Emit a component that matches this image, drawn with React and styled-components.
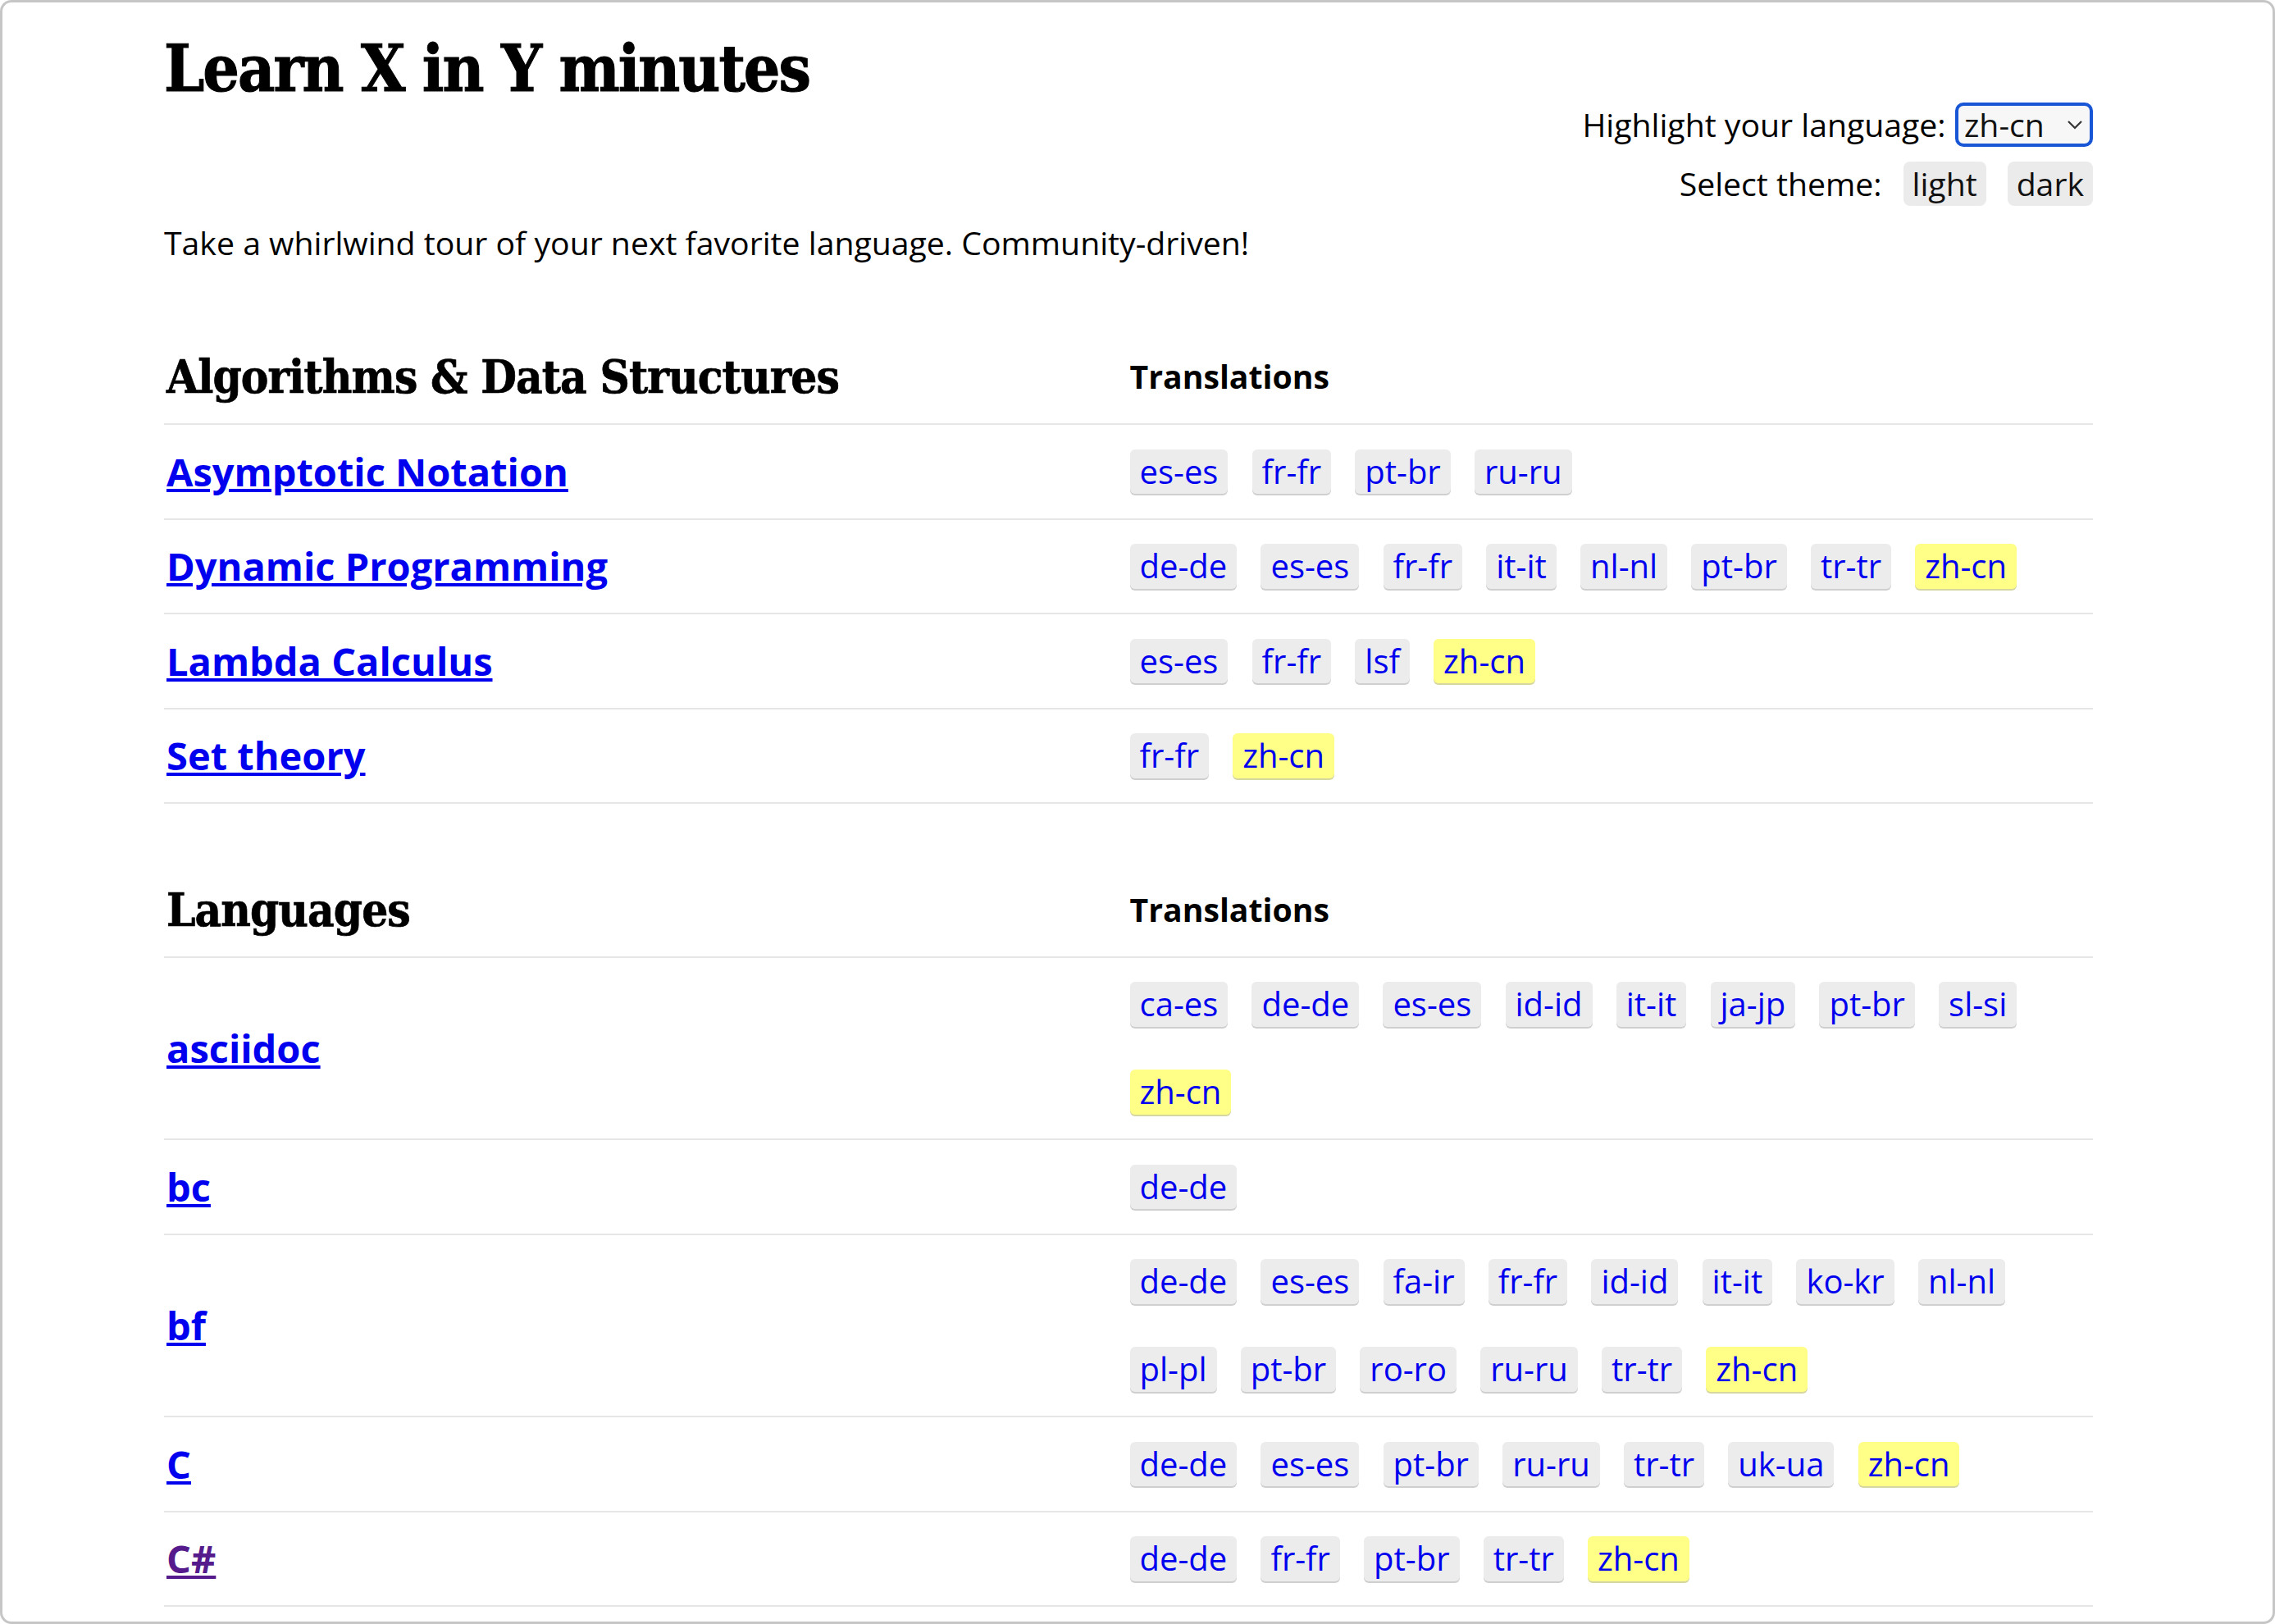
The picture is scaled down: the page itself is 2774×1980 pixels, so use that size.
import React from 'react';
import styled, { createGlobalStyle } from 'styled-components';

const GlobalStyle = createGlobalStyle`
  html, body {
    margin: 0;
    padding: 0;
    background: #fff;
  }
  body {
    font-family: "Open Sans", "Liberation Sans", sans-serif;
    color: #000;
  }
`;

const Frame = styled.div`
  zoom: 2;
  box-sizing: border-box;
  width: 1387px;
  height: 990px;
  border: 1.5px solid #c6c6c6;
  border-radius: 7px;
  overflow: hidden;
  background: #fff;
`;

const Content = styled.main`
  width: 1176px;
  margin-left: 98.5px;
  font-size: 19.6px;
`;

const Header = styled.header`
  display: flex;
  justify-content: space-between;
  align-items: flex-start;
`;

const Title = styled.h1`
  margin: 0;
  padding-top: 16.6px;
  font-family: "DejaVu Serif", "Liberation Serif", serif;
  font-stretch: condensed;
  font-weight: 700;
  font-size: 39px;
  line-height: 48px;
  letter-spacing: -1px;
  -webkit-text-stroke: 0.5px #000;
`;

const Controls = styled.div`
  display: flex;
  flex-direction: column;
  align-items: flex-end;
  gap: 9px;
  margin-top: 61px;
`;

const ControlRow = styled.div`
  display: flex;
  align-items: center;
  gap: ${(p) => p.$gap || 13}px;
  height: 27px;
  line-height: 27px;
`;

const SelectWrap = styled.span`
  position: relative;
  display: inline-block;
`;

const LangSelect = styled.select`
  appearance: none;
  -webkit-appearance: none;
  box-sizing: border-box;
  width: 84px;
  height: 26.7px;
  margin: 0;
  padding: 0 0 0 3.5px;
  border: 2px solid #1856d6;
  border-radius: 5px;
  background: #f7f7f8;
  color: #111;
  font-family: inherit;
  font-size: 19.6px;
  line-height: 22px;
  outline: none;
`;

const Chevron = styled.svg`
  position: absolute;
  right: 6px;
  top: 10.5px;
  width: 10px;
  height: 6px;
  pointer-events: none;
`;

const ThemeButton = styled.button`
  height: 27px;
  margin: 0;
  padding: 0 5.5px;
  border: 0;
  border-radius: 4px;
  background: #ebebeb;
  color: #111;
  font-family: inherit;
  font-size: 19.6px;
  line-height: 27px;
`;

const Tagline = styled.p`
  margin: 7.7px 0 0;
  line-height: 30px;
`;

const Section = styled.section`
  margin-top: ${(p) => p.$top}px;
`;

const Grid = styled.div`
  display: grid;
  grid-template-columns: 1fr 1fr;
  align-items: center;
  border-bottom: 1px solid #e6e6e6;

  & > :first-child {
    margin-left: 1.5px;
  }
  & > :last-child {
    margin-left: 0.75px;
  }
`;

const HeadRow = styled(Grid)`
  padding-bottom: 10.5px;
`;

const SectionTitle = styled.h2`
  margin: 0;
  font-family: "DejaVu Serif", "Liberation Serif", serif;
  font-stretch: condensed;
  font-weight: 700;
  font-size: 28px;
  line-height: 36px;
  letter-spacing: -0.45px;
  -webkit-text-stroke: 0.35px #000;
`;

const ColTitle = styled.div`
  font-weight: 700;
  font-size: 19.6px;
  line-height: 36px;
`;

const TopicLink = styled.a`
  font-weight: 700;
  font-size: 23.5px;
  line-height: 32px;
  color: ${(p) => (p.$visited ? '#551a8b' : '#0000ee')};
  text-decoration: underline;
  justify-self: start;
`;

const Tags = styled.div`
  display: flex;
  flex-wrap: wrap;
  column-gap: 14.6px;
  row-gap: 26.3px;
  padding: 14.7px 0;
`;

const Tag = styled.a`
  display: inline-block;
  height: 27.3px;
  padding: 0 6px;
  border-radius: 3px;
  background: ${(p) => (p.$mine ? '#ffff88' : '#ececec')};
  box-shadow: 0 1px 0 ${(p) => (p.$mine ? '#d6d6a0' : '#cfcfcf')};
  color: #0000ee;
  font-size: 20px;
  line-height: 27.3px;
  text-decoration: none;
`;

const MINE = 'zh-cn';

const sections = [
  {
    title: 'Algorithms & Data Structures',
    top: 48.5,
    rows: [
      { name: 'Asymptotic Notation', tr: ['es-es', 'fr-fr', 'pt-br', 'ru-ru'] },
      {
        name: 'Dynamic Programming',
        tr: ['de-de', 'es-es', 'fr-fr', 'it-it', 'nl-nl', 'pt-br', 'tr-tr', 'zh-cn'],
      },
      { name: 'Lambda Calculus', tr: ['es-es', 'fr-fr', 'lsf', 'zh-cn'] },
      { name: 'Set theory', tr: ['fr-fr', 'zh-cn'] },
    ],
  },
  {
    title: 'Languages',
    top: 46.5,
    rows: [
      {
        name: 'asciidoc',
        tr: ['ca-es', 'de-de', 'es-es', 'id-id', 'it-it', 'ja-jp', 'pt-br', 'sl-si', 'zh-cn'],
      },
      { name: 'bc', tr: ['de-de'] },
      {
        name: 'bf',
        tr: [
          'de-de', 'es-es', 'fa-ir', 'fr-fr', 'id-id', 'it-it', 'ko-kr',
          'nl-nl', 'pl-pl', 'pt-br', 'ro-ro', 'ru-ru', 'tr-tr', 'zh-cn',
        ],
      },
      { name: 'C', tr: ['de-de', 'es-es', 'pt-br', 'ru-ru', 'tr-tr', 'uk-ua', 'zh-cn'] },
      { name: 'C#', visited: true, tr: ['de-de', 'fr-fr', 'pt-br', 'tr-tr', 'zh-cn'] },
    ],
  },
];

const languages = ['ar-ar', 'de-de', 'es-es', 'fr-fr', 'ja-jp', 'pt-br', 'ru-ru', 'zh-cn'];

export default function App() {
  return (
    <>
      <GlobalStyle />
      <Frame>
        <Content>
          <Header>
            <Title>Learn X in Y minutes</Title>
            <Controls>
              <ControlRow $gap={5.7}>
                <span>Highlight your language:</span>
                <SelectWrap>
                  <LangSelect defaultValue={MINE}>
                    {languages.map((l) => (
                      <option key={l} value={l}>
                        {l}
                      </option>
                    ))}
                  </LangSelect>
                  <Chevron viewBox="0 0 10 6">
                    <path d="M1 1l4 4 4-4" fill="none" stroke="#333" strokeWidth="1.1" />
                  </Chevron>
                </SelectWrap>
              </ControlRow>
              <ControlRow>
                <span>Select theme:</span>
                <ThemeButton>light</ThemeButton>
                <ThemeButton>dark</ThemeButton>
              </ControlRow>
            </Controls>
          </Header>
          <Tagline>Take a whirlwind tour of your next favorite language. Community-driven!</Tagline>
          {sections.map((s) => (
            <Section key={s.title} $top={s.top}>
              <HeadRow>
                <SectionTitle>{s.title}</SectionTitle>
                <ColTitle>Translations</ColTitle>
              </HeadRow>
              {s.rows.map((r) => (
                <Grid key={r.name}>
                  <TopicLink href="#" $visited={r.visited}>
                    {r.name}
                  </TopicLink>
                  <Tags>
                    {r.tr.map((t) => (
                      <Tag key={t} href="#" $mine={t === MINE}>
                        {t}
                      </Tag>
                    ))}
                  </Tags>
                </Grid>
              ))}
            </Section>
          ))}
        </Content>
      </Frame>
    </>
  );
}
